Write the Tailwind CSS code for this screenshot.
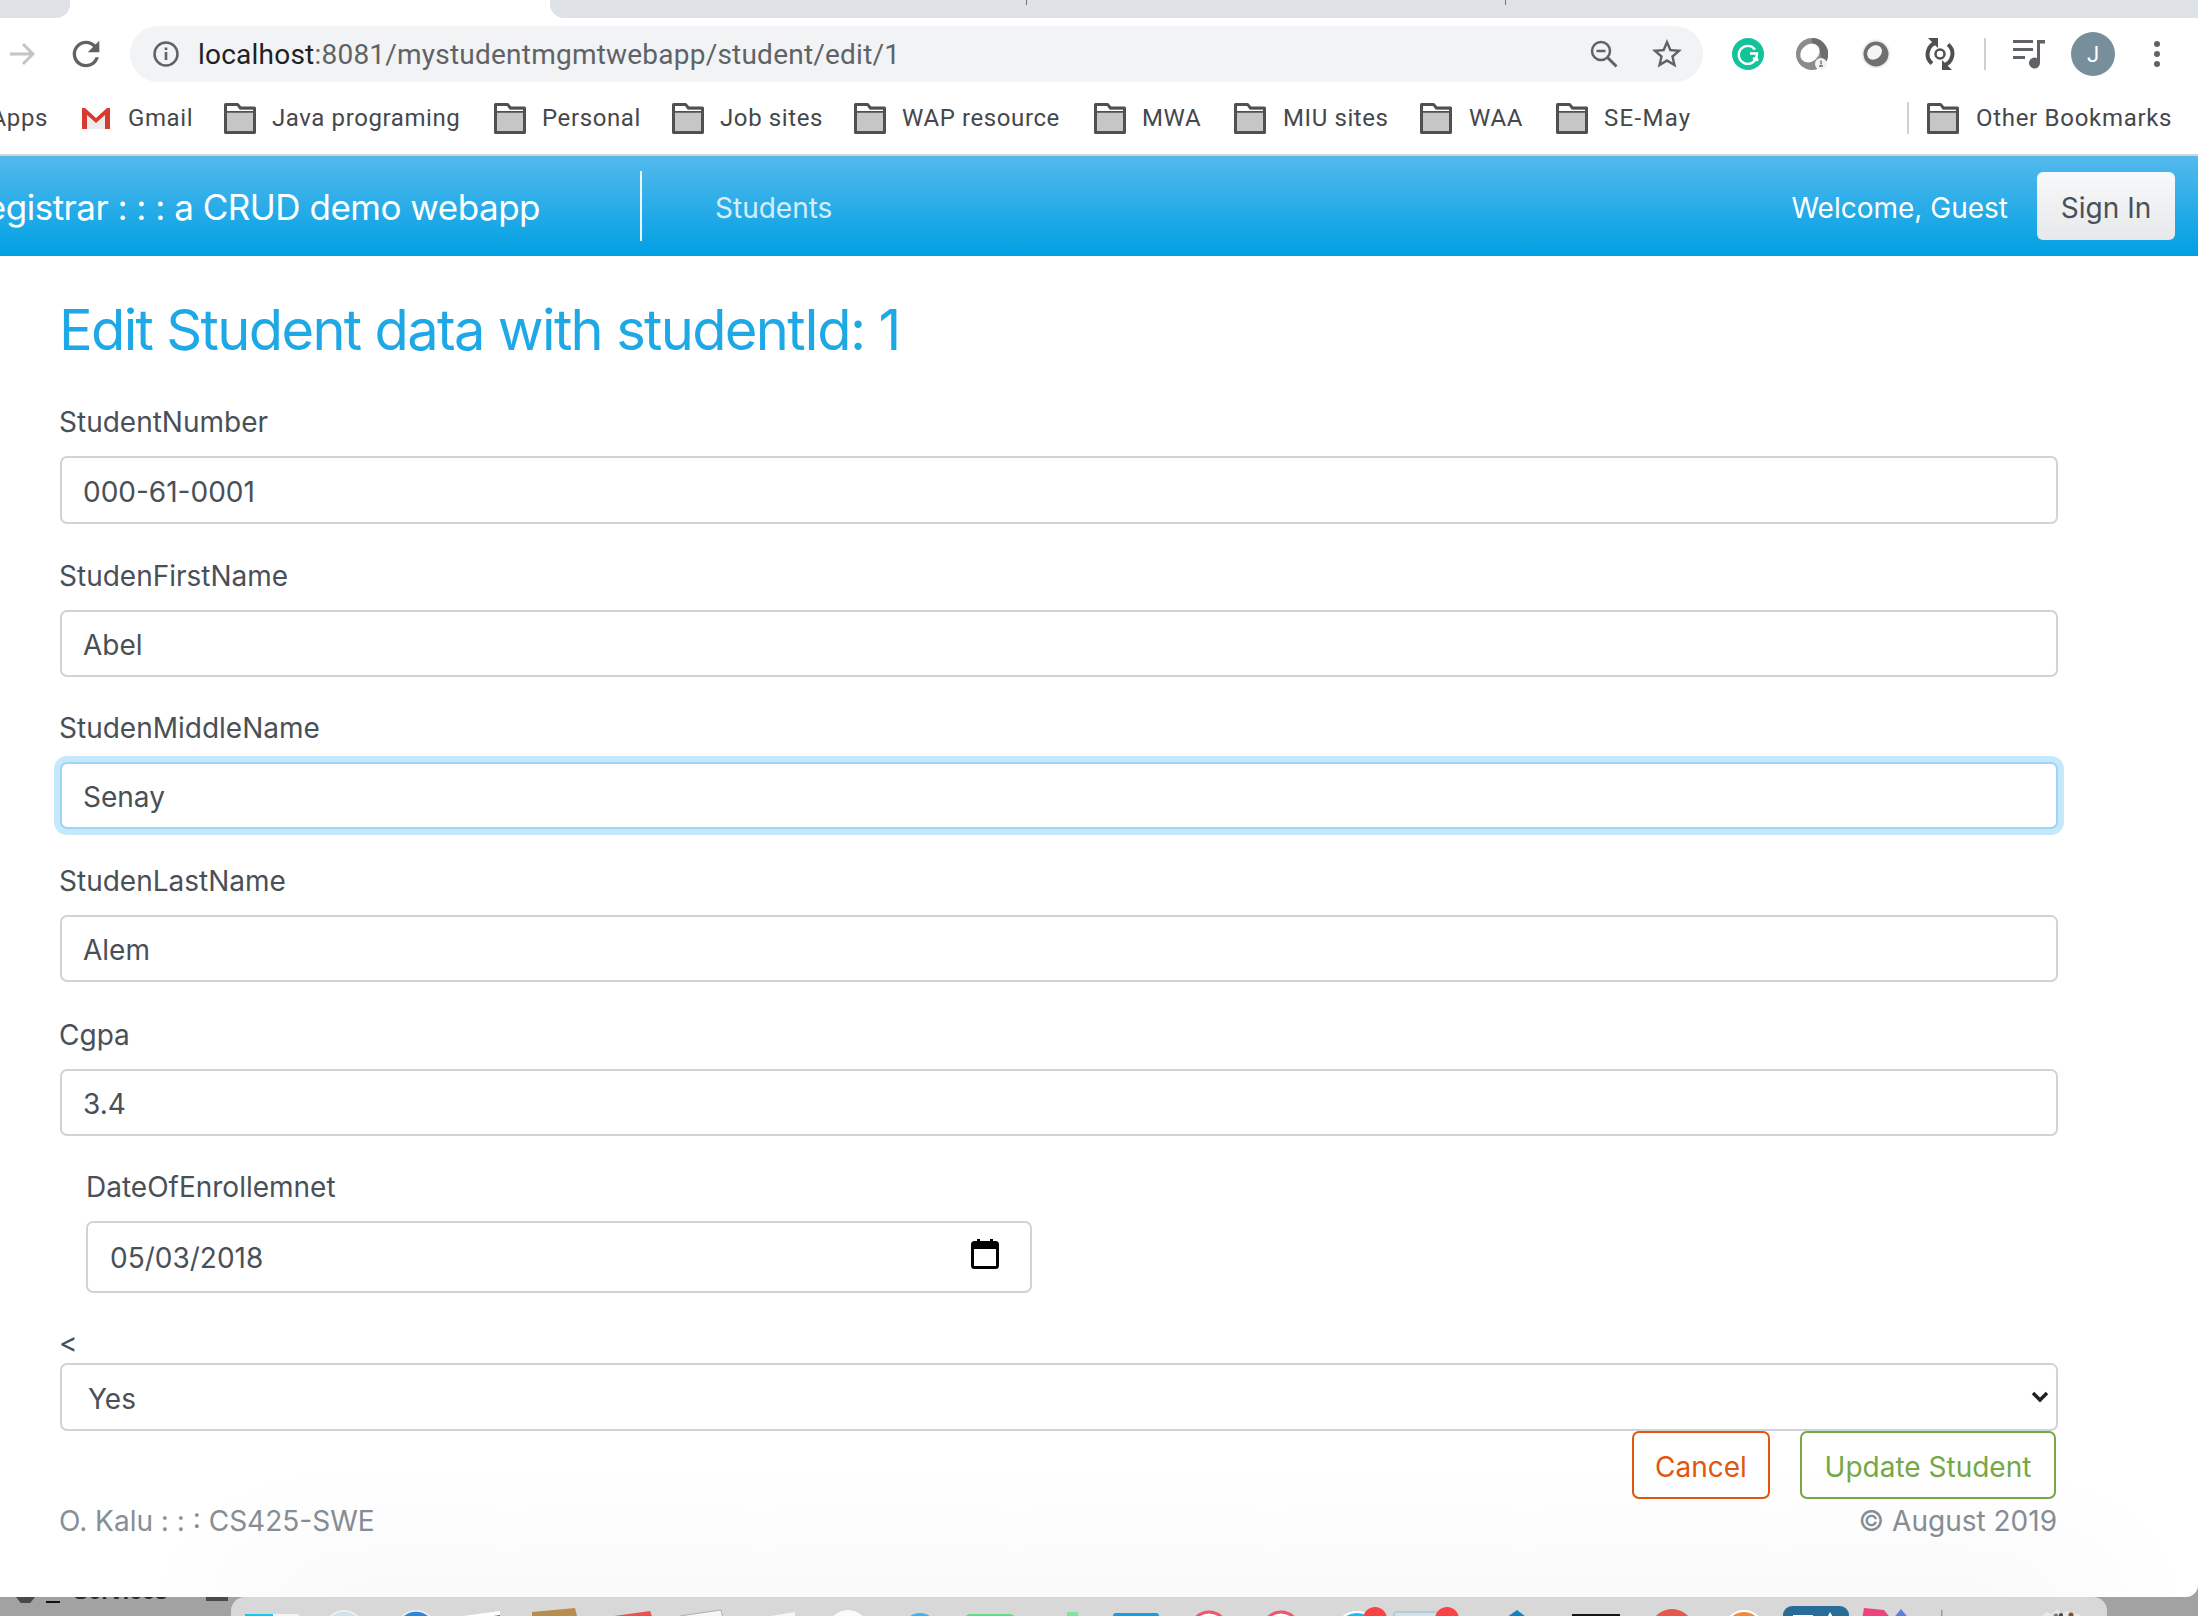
<!DOCTYPE html>
<html>
<head>
<meta charset="utf-8">
<script src="https://cdn.jsdelivr.net/npm/@tailwindcss/browser@4"></script>
</head>
<body class="m-0">
<svg width="0" height="0" class="absolute">
  <defs>
    <symbol id="folder" viewBox="0 0 32 32">
      <path d="M1.5 30.5V2.5h12l3 3.5h14v24.500z" fill="#c6c6c6" stroke="#505050" stroke-width="3" stroke-linejoin="round"/>
      <path d="M1.500 9.500h29" stroke="#505050" stroke-width="2.500" fill="#fff"/>
      <path d="M3 4h10l2.500 4H3z" fill="#fff"/>
      <path d="M3 8h26v1H3z" fill="#fff"/>
    </symbol>
  </defs>
</svg>
<div class="relative w-[2198px] h-[1616px] overflow-hidden bg-[linear-gradient(#8e8e8e,#a8a8a8_60%,#888_75%,#a2a2a2_80%)]">
  <!-- desktop remnants behind the window -->
  <div class="absolute left-0 top-[1597px] w-[231px] h-[19px] overflow-hidden">
    <div class="absolute left-[16px] top-0 w-[19px] h-[6px] bg-[#4a4a4a] [clip-path:polygon(0_0,100%_0,75%_100%,25%_100%)]"></div>
    <div class="absolute left-[46px] top-[4px] w-[14px] h-[2px] bg-[#111]"></div>
    <div class="absolute left-[73px] -top-[19px] text-[23px] leading-[26px] font-bold text-[#2b2b2b] font-['Liberation_Sans',sans-serif] whitespace-nowrap">Services</div>
    <div class="absolute left-[206px] top-0 w-[22px] h-[4px] bg-[#4a4a4a]"></div>
  </div>

  <!-- dock -->
  <div class="absolute left-[231px] top-[1597px] w-[1876px] h-[19px] bg-[#d8d8d8] rounded-t-[14px] overflow-hidden">
    <svg width="1876" height="19" viewBox="231 1597 1876 19" class="block">
      <rect x="245" y="1614" width="28" height="4" fill="#10c8f0"/><rect x="273" y="1614" width="26" height="4" fill="#f4f4f4"/>
      <circle cx="344" cy="1631" r="20" fill="#cfe3e8" stroke="#f2f2f2" stroke-width="1.500"/>
      <circle cx="416" cy="1631" r="20" fill="#2a87dc" stroke="#f2f2f2" stroke-width="1.500"/>
      <path d="M463 1616l37-5v8h-37z" fill="#fff"/><path d="M480 1618l20-3v4h-20z" fill="#1378d4"/>
      <path d="M532 1612l43-4 3 12h-46z" fill="#b98d50"/>
      <path d="M614 1616l36-5 3 8h-39z" fill="#ee4f4f"/>
      <path d="M680 1616l41-6 2 9h-43z" fill="#f6f6f6" stroke="#777" stroke-width=".5"/>
      <path d="M771 1616l24-4v7h-24z" fill="#f6f6f6"/>
      <circle cx="848" cy="1630" r="20" fill="#fbfbfb"/><circle cx="848" cy="1619" r="3" fill="#e98b2a"/>
      <circle cx="920" cy="1630" r="17" fill="#3db4f2"/>
      <rect x="965" y="1614" width="50" height="12" rx="5" fill="#62dc86"/>
      <rect x="1067" y="1612" width="11" height="8" fill="#7ae79a"/>
      <rect x="1113" y="1613" width="46" height="10" rx="3" fill="#159ce6"/><rect x="1121" y="1616" width="30" height="6" fill="#fff"/>
      <circle cx="1209" cy="1630" r="18" fill="#fff" stroke="#f0566e" stroke-width="3"/>
      <circle cx="1281" cy="1630" r="18" fill="#fff" stroke="#f0566e" stroke-width="3"/>
      <circle cx="1357" cy="1634" r="22" fill="#18bdf0" stroke="#fff" stroke-width="2"/>
      <circle cx="1375" cy="1619" r="12" fill="#f84444"/>
      <rect x="1394" y="1612" width="46" height="10" rx="2" fill="#cfe2ea" stroke="#9bb6c6" stroke-width="1"/>
      <circle cx="1447" cy="1619" r="12" fill="#f84444"/>
      <path d="M1517 1610l13 10h-27z" fill="#0f84c4"/>
      <rect x="1572" y="1614" width="48" height="6" fill="#161616"/>
      <circle cx="1672" cy="1631" r="22" fill="#e5574b"/>
      <circle cx="1744" cy="1630" r="19" fill="#f58a3c" stroke="#fff" stroke-width="2"/>
      <rect x="1783" y="1606" width="66" height="20" rx="9" fill="#2a6c98"/><path d="M1793 1615h20v2h-20zM1830 1612l3 5-6 1z" fill="#fff"/>
      <path d="M1864 1608l20 2 8 10h-30z" fill="#f0427f"/><path d="M1901 1609l9 11h-18z" fill="#5a7fdc"/>
      <rect x="1941" y="1610" width="1.500" height="8" fill="#9a9a9a"/>
      <path d="M2040 1618l6-6 6 2 5-5 5 5 4-3 7 2 6 1 5 6z" fill="#e8e8e8"/>
      <circle cx="2056" cy="1616" r="2.500" fill="#7a7a7a"/><circle cx="2071" cy="1615" r="2.500" fill="#8a4a2a"/><circle cx="2061" cy="1615" r="2" fill="#444"/>
    </svg>
  </div>

  <!-- browser window -->
  <div class="relative h-[1597px] bg-white rounded-br-[12px] overflow-hidden flex flex-col">
    <!-- tab strip -->
    <div class="h-[18px] flex shrink-0">
      <div class="w-[70px] bg-[#dee1e6] rounded-br-[14px]"></div>
      <div class="w-[480px] bg-white"></div>
      <div class="flex-1 bg-[#dee1e6] rounded-bl-[14px] flex items-start">
        <div class="ml-[476px] w-[1px] h-[5px] bg-[#6f7378]"></div>
        <div class="ml-[478px] w-[1px] h-[5px] bg-[#6f7378]"></div>
      </div>
    </div>

    <!-- toolbar -->
    <div class="h-[72px] flex items-center pl-[9px] shrink-0">
      <svg width="26" height="26" viewBox="0 0 26 26" class="shrink-0"><path d="M1 13h23M14 3l10 10-10 10" fill="none" stroke="#c4c4c4" stroke-width="3"/></svg>
      <svg width="40" height="40" viewBox="0 0 24 24" class="ml-[31px] shrink-0" fill="#5f6368"><path d="M17.650 6.350A7.958 7.958 0 0012 4c-4.420 0-7.990 3.580-7.990 8s3.570 8 7.990 8c3.730 0 6.840-2.550 7.730-6h-2.080A5.990 5.990 0 0112 18c-3.310 0-6-2.690-6-6s2.690-6 6-6c1.660 0 3.140.690 4.220 1.780L13 11h7V4l-2.350 2.350z"/></svg>
      <div class="ml-[24px] w-[1573px] h-[56px] rounded-[28px] bg-[#f1f3f4] flex items-center pl-[23px] pr-[18px] shrink-0">
        <svg width="26" height="26" viewBox="0 0 26 26" class="shrink-0"><circle cx="13" cy="13" r="11.500" fill="none" stroke="#5f6368" stroke-width="2.500"/><rect x="11.700" y="11" width="2.600" height="8" fill="#5f6368"/><rect x="11.700" y="6.500" width="2.600" height="2.600" fill="#5f6368"/></svg>
        <div class="ml-[19px] pt-[1px] flex-1 text-[28px] leading-[36px] font-['Roboto',sans-serif] text-[#5f6368] whitespace-nowrap tracking-[0.22px]"><span class="text-[#202124]">localhost</span>:8081/mystudentmgmtwebapp/student/edit/1</div>
        <svg width="28" height="28" viewBox="0 0 28 28" class="shrink-0"><circle cx="11" cy="11" r="9" fill="none" stroke="#5f6368" stroke-width="2.500"/><path d="M6.500 11h9" stroke="#5f6368" stroke-width="2.500"/><path d="M17.500 17.500l9 9" stroke="#5f6368" stroke-width="3"/></svg>
        <svg width="36" height="36" viewBox="0 0 24 24" class="ml-[31px] shrink-0" fill="#5f6368"><path fill-rule="evenodd" d="M22 9.240l-7.190-.62L12 2 9.190 8.630 2 9.240l5.460 4.730L5.820 21 12 17.270 18.180 21l-1.630-7.030L22 9.240zM12 15.400l-3.760 2.270 1-4.280-3.320-2.880 4.380-.38L12 6.100l1.710 4.040 4.380.38-3.320 2.880 1 4.280L12 15.400z"/></svg>
      </div>
      <svg width="32" height="32" viewBox="0 0 32 32" class="ml-[29px] shrink-0"><circle cx="16" cy="16" r="16" fill="#15c39a"/><path d="M23 11.500A9 9 0 1 0 24.500 19l.5-3.500h-7M21 21l3.500-1.500 1 3.500" fill="none" stroke="#fff" stroke-width="2.400"/></svg>
      <svg width="32" height="32" viewBox="0 0 32 32" class="ml-[32px] shrink-0"><circle cx="16" cy="16" r="16" fill="#8b8b8b"/><path d="M16 0a16 16 0 0 1 14 24L24 27C27 18 24 9 16 6z" fill="#6d6d6d"/><ellipse cx="14" cy="15" rx="10.500" ry="8.500" transform="rotate(-40 14 15)" fill="#fff"/><circle cx="25" cy="26" r="6" fill="#f3f3f3"/><path d="M25 22.500v4M23 28h4" stroke="#666" stroke-width="1.300"/></svg>
      <svg width="30" height="30" viewBox="0 0 30 30" class="ml-[33px] shrink-0"><circle cx="15" cy="15" r="14.500" fill="#f0f0f0"/><circle cx="15" cy="15" r="12.500" fill="#707070"/><ellipse cx="13.500" cy="13.500" rx="8" ry="6.500" transform="rotate(-40 13.500 13.500)" fill="#f5f5f5"/></svg>
      <svg width="32" height="32" viewBox="0 0 32 32" class="ml-[33px] shrink-0"><path d="M13 4.500A12 12 0 0 0 8 25.500M19 27.500A12 12 0 0 0 24 6.500" fill="none" stroke="#505050" stroke-width="4"/><path d="M4 0h10v10zM28 32H18V22z" fill="#505050"/><circle cx="16" cy="16" r="4.500" fill="none" stroke="#505050" stroke-width="2.500"/></svg>
      <div class="ml-[28px] w-[2px] h-[32px] bg-[#cfcfcf] shrink-0"></div>
      <svg width="32" height="32" viewBox="0 0 32 32" class="ml-[27px] shrink-0"><path d="M0 2h20v3H0zM0 10h20v3H0zM0 18h12v3H0z" fill="#5f6368"/><path d="M24 2h8v3.500h-5V25a5.500 5.500 0 1 1-3-4.900z" fill="#5f6368"/></svg>
      <div class="ml-[26px] w-[44px] h-[44px] rounded-full bg-[#778f9b] flex items-center justify-center text-white text-[22px] font-['Roboto',sans-serif] shrink-0">J</div>
      <div class="ml-[39px] flex flex-col gap-[4px] shrink-0">
        <span class="block w-[6px] h-[6px] rounded-full bg-[#5f6368]"></span>
        <span class="block w-[6px] h-[6px] rounded-full bg-[#5f6368]"></span>
        <span class="block w-[6px] h-[6px] rounded-full bg-[#5f6368]"></span>
      </div>
    </div>

    <!-- bookmarks -->
    <div class="h-[66px] pb-[8px] flex items-center text-[24px] tracking-[0.6px] text-[#45484c] font-['Roboto',sans-serif] whitespace-nowrap shrink-0 border-b-2 border-[#d5d5d5]">
      <span class="w-[82px] -ml-[17px] pl-0 shrink-0 text-right pr-[17px] overflow-hidden">Apps</span>
      <svg width="28" height="22" viewBox="0 0 28 22" class="ml-[17px] shrink-0"><path d="M0 2v20h28V2L14 12z" fill="#ececec"/><path d="M0 22V1h3l11 10L25 1h3v21h-5V8l-9 8-9-8v14z" fill="#d93a2f"/></svg>
      <span class="ml-[18px] w-[64px] shrink-0">Gmail</span>
      <svg width="32" height="32" class="ml-[32px] shrink-0"><use href="#folder"/></svg>
      <span class="ml-[16px] w-[188px] shrink-0">Java programing</span>
      <svg width="32" height="32" class="ml-[34px] shrink-0"><use href="#folder"/></svg>
      <span class="ml-[16px] w-[98px] shrink-0">Personal</span>
      <svg width="32" height="32" class="ml-[32px] shrink-0"><use href="#folder"/></svg>
      <span class="ml-[16px] w-[102px] shrink-0">Job sites</span>
      <svg width="32" height="32" class="ml-[32px] shrink-0"><use href="#folder"/></svg>
      <span class="ml-[16px] w-[159px] shrink-0">WAP resource</span>
      <svg width="32" height="32" class="ml-[33px] shrink-0"><use href="#folder"/></svg>
      <span class="ml-[16px] w-[59px] shrink-0">MWA</span>
      <svg width="32" height="32" class="ml-[33px] shrink-0"><use href="#folder"/></svg>
      <span class="ml-[17px] w-[104px] shrink-0">MIU sites</span>
      <svg width="32" height="32" class="ml-[33px] shrink-0"><use href="#folder"/></svg>
      <span class="ml-[17px] w-[53px] shrink-0">WAA</span>
      <svg width="32" height="32" class="ml-[34px] shrink-0"><use href="#folder"/></svg>
      <span class="ml-[16px] w-[86px] shrink-0 tracking-[1.3px]">SE-May</span>
      <div class="ml-[217px] w-[2px] h-[32px] bg-[#cfcfcf] shrink-0"></div>
      <svg width="32" height="32" class="ml-[18px] shrink-0"><use href="#folder"/></svg>
      <span class="ml-[17px] shrink-0 tracking-[0.7px]">Other Bookmarks</span>
    </div>

    <!-- navbar -->
    <div class="h-[100px] shrink-0 bg-[linear-gradient(#54b9ed,#00a0e3)] flex items-center font-['Inter',sans-serif] whitespace-nowrap">
      <div class="w-[540px] overflow-hidden flex justify-end text-[35px] tracking-[-0.5px] text-white shrink-0 pt-[3px]">
        <span>Registrar : : : a CRUD demo webapp</span>
      </div>
      <div class="ml-[100px] w-[2px] h-[70px] bg-white/90 shrink-0"></div>
      <span class="ml-[73px] pt-[3px] text-[28px] text-white/80">Students</span>
      <span class="ml-auto pt-[3px] text-[28px] text-white">Welcome, Guest</span>
      <div class="ml-[29px] mr-[23px] w-[138px] h-[68px] pt-[3px] rounded-[6px] bg-[linear-gradient(#f8f9fa,#e6e8ea)] flex items-center justify-center text-[28px] text-[#495057]">Sign In</div>
    </div>

    <!-- page -->
    <div class="flex-1 relative pl-[60px] w-[2058px] pt-[41px] font-['Inter',sans-serif] text-[28px] text-[#495057]">
      <h2 class="h-[67px] leading-[67px] text-[56px] tracking-[-1.65px] -ml-[1px] text-[#1ea8e6] font-normal mb-[36px] whitespace-nowrap">Edit Student data with studentId: 1</h2>

      <div class="mb-[30px]">
        <label class="block h-[42px] leading-[44px] -ml-[1px] mb-[14px]">StudentNumber</label>
        <input readonly value="000-61-0001" class="block w-full h-[68px] px-[21px] pt-[3px] border-2 border-[#ced4da] rounded-[7px] bg-white">
      </div>
      <div class="mb-[29px]">
        <label class="block h-[42px] leading-[44px] -ml-[1px] mb-[14px]">StudenFirstName</label>
        <input readonly value="Abel" class="block w-full h-[67px] px-[21px] pt-[2px] border-2 border-[#ced4da] rounded-[7px] bg-white">
      </div>
      <div class="mb-[30px]">
        <label class="block h-[42px] leading-[44px] -ml-[1px] mb-[14px]">StudenMiddleName</label>
        <input readonly value="Senay" class="block w-full h-[67px] px-[21px] pt-[2px] border-2 border-[#9dd5f5] rounded-[7px] bg-white shadow-[0_0_0_6px_#c5e8fa] outline-none">
      </div>
      <div class="mb-[31px]">
        <label class="block h-[42px] leading-[44px] -ml-[1px] mb-[14px]">StudenLastName</label>
        <input readonly value="Alem" class="block w-full h-[67px] px-[21px] pt-[2px] border-2 border-[#ced4da] rounded-[7px] bg-white">
      </div>
      <div class="mb-[29px]">
        <label class="block h-[42px] leading-[44px] -ml-[1px] mb-[14px]">Cgpa</label>
        <input readonly value="3.4" class="block w-full h-[67px] px-[21px] pt-[2px] border-2 border-[#ced4da] rounded-[7px] bg-white">
      </div>
      <div class="mb-[28px] pl-[26px] w-[972px]">
        <label class="block h-[42px] leading-[44px] mb-[14px]">DateOfEnrollemnet</label>
        <div class="relative">
          <input readonly value="05/03/2018" class="block w-full h-[72px] px-[22px] pt-[1px] border-2 border-[#ced4da] rounded-[7px] bg-white">
          <svg width="28" height="30" viewBox="0 0 28 30" class="absolute right-[33px] top-[18px]"><path d="M6 0h3v4H6zM19 0h3v4h-3z" fill="#000"/><rect x="1.500" y="3.500" width="25" height="25" rx="2" fill="#fff" stroke="#000" stroke-width="3"/><rect x="1.500" y="3.500" width="25" height="6.500" fill="#000"/></svg>
        </div>
      </div>
      <div>
        <label class="block h-[42px] leading-[44px] -ml-[1px]">&lt;</label>
        <div class="relative">
          <select class="block w-full h-[68px] pl-[26px] pt-[3px] border-2 border-[#ced4da] rounded-[7px] bg-white appearance-none outline-none"><option>Yes</option></select>
          <svg width="18" height="12" viewBox="0 0 18 12" class="absolute right-[9px] top-[28px]"><path d="M2 2l7 7 7-7" fill="none" stroke="#222" stroke-width="3.500"/></svg>
        </div>
      </div>
      <div class="flex justify-end mr-[2px]">
        <div class="w-[138px] h-[68px] pt-[3px] border-2 border-[#e2560e] rounded-[7px] text-[#e2560e] flex items-center justify-center">Cancel</div>
        <div class="ml-[30px] w-[256px] h-[68px] pt-[3px] border-2 border-[#76a845] rounded-[7px] text-[#76a845] flex items-center justify-center whitespace-nowrap">Update Student</div>
      </div>
      <div class="flex justify-between h-[42px] leading-[42px] mt-[1px] -ml-[1px] mr-[1px] text-[#868e96]">
        <span>O. Kalu : : : CS425-SWE</span>
        <span>© August 2019</span>
      </div>
    </div>

    <!-- dock's shadow on the window -->
    <div class="absolute left-[231px] top-[1597px] w-[1876px] h-[20px] rounded-t-[14px] shadow-[0_0_140px_rgba(0,0,0,0.18)]"></div>
  </div>
</div>
</body>
</html>
